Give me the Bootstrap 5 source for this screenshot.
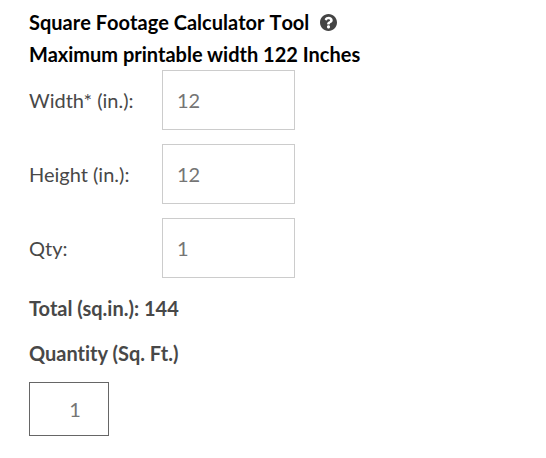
<!DOCTYPE html>
<html lang="en">
<head>
<meta charset="utf-8">
<meta name="viewport" content="width=device-width, initial-scale=1">
<title>Square Footage Calculator Tool</title>
<link href="https://cdn.jsdelivr.net/npm/bootstrap@5.3.0/dist/css/bootstrap.min.css" rel="stylesheet">
<style>
body { font-family: Lato, sans-serif; font-size: 20px; line-height: 32px; color: #484848; background: #fff; font-variant-ligatures: none; }
.calc { padding: 6px 29px 22px; }
.calc-title { font-size: 20px; line-height: 32px; font-weight: 700; color: #000; }
.calc-name { font-kerning: none; }
.help-btn { line-height: 0; color: #444; margin-left: 11px; }
.field-rows { gap: 14px; }
.field-label { width: 133px; }
.calc .field-input { width: 133px; height: 60px; padding: 0 14px; font-size: 20px; color: #757575; border: 1px solid #ccc; border-radius: 0; }
.calc .qty-input { width: 80px; height: 54px; padding: 0 0 0 12px; font-size: 20px; color: #757575; border: 1px solid #666; border-radius: 0; text-align: center; }
.total-line { margin-top: 14px; font-weight: 700; }
.qty-label { margin: 13px 0; font-weight: 700; }
</style>
</head>
<body>
<main class="calc">
  <div class="d-flex align-items-center">
    <h1 class="calc-title calc-name m-0">Square Footage Calculator Tool</h1>
    <button type="button" class="help-btn border-0 bg-transparent p-0" aria-label="Help">
      <svg width="17" height="17" viewBox="8 8 496 496" fill="currentColor" aria-hidden="true"><path d="M504 256c0 136.997-111.043 248-248 248S8 392.997 8 256C8 119.083 119.043 8 256 8s248 111.083 248 248zM262.655 90c-54.497 0-89.255 22.957-116.549 63.758-3.536 5.286-2.353 12.415 2.715 16.258l34.699 26.31c5.205 3.947 12.621 3.008 16.665-2.122 17.864-22.658 30.113-35.797 57.303-35.797 20.429 0 45.698 13.148 45.698 32.958 0 14.976-12.363 22.667-32.534 33.976C247.128 238.528 216 254.941 216 296v4c0 6.627 5.373 12 12 12h56c6.627 0 12-5.373 12-12v-1.333c0-28.462 83.186-29.647 83.186-106.667 0-58.002-60.165-102-116.531-102zM256 338c-25.365 0-46 20.635-46 46 0 25.364 20.635 46 46 46s46-20.636 46-46c0-25.365-20.635-46-46-46z"/></svg>
    </button>
  </div>
  <h2 class="calc-title m-0">Maximum printable width 122 Inches</h2>
  <form>
    <div class="field-rows d-flex flex-column">
      <div class="d-flex align-items-center">
        <label class="field-label" for="width">Width* (in.):</label>
        <input class="form-control field-input" id="width" type="text" value="12">
      </div>
      <div class="d-flex align-items-center">
        <label class="field-label" for="height">Height (in.):</label>
        <input class="form-control field-input" id="height" type="text" value="12">
      </div>
      <div class="d-flex align-items-center">
        <label class="field-label" for="qty">Qty:</label>
        <input class="form-control field-input" id="qty" type="text" value="1">
      </div>
    </div>
    <div class="total-line">Total (sq.in.): 144</div>
    <label class="qty-label d-block" for="sqft">Quantity (Sq. Ft.)</label>
    <input class="form-control qty-input" id="sqft" type="text" value="1">
  </form>
</main>
<script src="https://cdn.jsdelivr.net/npm/bootstrap@5.3.0/dist/js/bootstrap.bundle.min.js"></script>
</body>
</html>
